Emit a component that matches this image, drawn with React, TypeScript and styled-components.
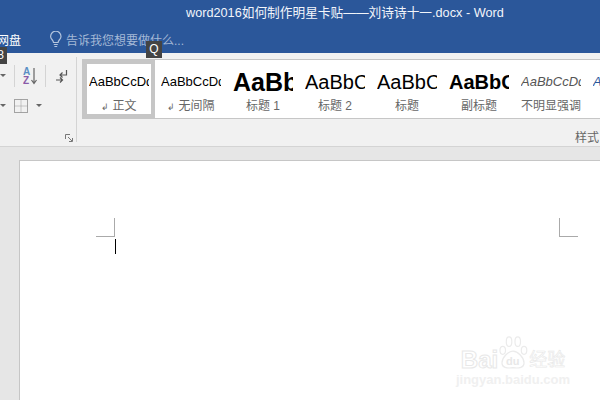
import React from "react";
import styled, { createGlobalStyle } from "styled-components";

const GlobalStyle = createGlobalStyle`
    html, body {
        margin: 0;
        padding: 0;
        background: #e6e6e6;
    }
    body {
        font-family: "Liberation Sans", "Noto Sans CJK SC", sans-serif;
    }
`

interface IStyleItem {
    sample: string,
    name: string,
    size: number,
    bold?: boolean,
    italic?: boolean,
    mark?: boolean,
    selected?: boolean,
    sampleColor?: string
}

const styleItems: IStyleItem[] = [
    { sample: "AaBbCcDd", name: "正文", size: 13, mark: true, selected: true },
    { sample: "AaBbCcDd", name: "无间隔", size: 13, mark: true },
    { sample: "AaBbC", name: "标题 1", size: 25, bold: true },
    { sample: "AaBbC", name: "标题 2", size: 20 },
    { sample: "AaBbC", name: "标题", size: 20 },
    { sample: "AaBbC", name: "副标题", size: 20, bold: true },
    { sample: "AaBbCcDd", name: "不明显强调", size: 13, italic: true, sampleColor: "#555" },
    { sample: "AaBbCcDd", name: "", size: 13, italic: true, sampleColor: "#2b579a" },
];

const App: React.FC = () => {
    return (
        <Page>
            <GlobalStyle />
            <TitleBar>
                <TitleRow>word2016如何制作明星卡贴——刘诗诗十一.docx - Word</TitleRow>
                <TabRow>
                    <TabName>网盘</TabName>
                    <TellMe>
                        <svg width="14" height="17" viewBox="0 0 14 17" fill="none" stroke="#b4c5de" strokeWidth="1.2">
                            <path d="M4.5 11.5C4.5 9 1.6 8.4 1.6 5.4a5.2 5.2 0 0 1 10.4 0c0 3-2.9 3.6-2.9 6.1z" />
                            <path d="M4.8 13.5h4M5.4 15.5h2.8" />
                        </svg>
                        <TellMeText>告诉我您想要做什么...</TellMeText>
                    </TellMe>
                </TabRow>
                <KeyTip $left={-6} $top={47} $width={13}>8</KeyTip>
                <KeyTip $left={146} $top={41} $width={16}>Q</KeyTip>
            </TitleBar>
            <Ribbon>
                <ParagraphGroup>
                    <ToolRow>
                        <Caret />
                        <Divider />
                        <svg width="14" height="20" viewBox="0 0 14 20">
                            <text x="0" y="9" fontSize="10" fontWeight="700" fill="#5b8fc5" fontFamily="Liberation Sans">A</text>
                            <text x="0" y="18" fontSize="10" fontWeight="700" fill="#8a5ba8" fontFamily="Liberation Sans">Z</text>
                            <path d="M11 2v15M8.5 14l2.5 3.5 2.5-3.5" stroke="#666" strokeWidth="1.2" fill="none" />
                        </svg>
                        <Divider />
                        <svg width="16" height="16" viewBox="0 0 16 16" fill="none" stroke="#555" strokeWidth="1.2">
                            <path d="M12.5 2v5H6M8.5 4.5 6 7l2.5 2.5" />
                            <path d="M2 12h6M6 9.5 8.5 12 6 14.5" />
                        </svg>
                    </ToolRow>
                    <ToolRow>
                        <Caret />
                        <svg width="14" height="14" viewBox="0 0 14 14" fill="none" stroke="#555" strokeWidth="1" strokeDasharray="1 1">
                            <path d="M.5.5h13v13H.5z" />
                            <path d="M7 .5v13M.5 7h13" stroke="#999" />
                        </svg>
                        <Caret />
                    </ToolRow>
                    <Launcher>
                        <svg width="8" height="8" viewBox="0 0 8 8" fill="none" stroke="#777">
                            <path d="M.5 5V.5H5M3 3l4 4M7.5 4v3.5H4" />
                        </svg>
                    </Launcher>
                </ParagraphGroup>
                <StylesGroup>
                    <Gallery>
                        {styleItems.map((item, index) => (
                            <StyleCard key={index} $selected={item.selected}>
                                <Sample
                                    $size={item.size}
                                    $bold={item.bold}
                                    $italic={item.italic}
                                    $color={item.sampleColor}
                                >
                                    {item.sample}
                                </Sample>
                                <StyleName>
                                    {item.mark && <ReturnMark>↲</ReturnMark>}
                                    {item.name}
                                </StyleName>
                            </StyleCard>
                        ))}
                    </Gallery>
                    <GroupLabel>样式</GroupLabel>
                </StylesGroup>
            </Ribbon>
            <DocArea>
                <DocPage>
                    <Margins>
                        <LeftCorner>
                            <Cursor />
                        </LeftCorner>
                        <RightCorner />
                    </Margins>
                    <Watermark>
                        <WatermarkLogo>
                            <WatermarkBrand>Bai</WatermarkBrand>
                            <svg width="30" height="37" viewBox="0 0 38 46" fill="#fff" stroke="#ebebeb" strokeWidth="1.5">
                                <ellipse cx="6" cy="19" rx="3.5" ry="5" />
                                <ellipse cx="14" cy="8" rx="3.5" ry="6" />
                                <ellipse cx="25" cy="8" rx="3.5" ry="6" />
                                <ellipse cx="33" cy="19" rx="3.5" ry="5" />
                                <path d="M19 20c6 0 14 8 14 15 0 6-6 7-14 6-8 1-14 0-14-6 0-7 8-15 14-15z" />
                                <text x="10" y="38" fontSize="14" fontWeight="700" fill="#e8e8e8" strokeWidth="0" fontFamily="Liberation Sans">du</text>
                            </svg>
                            <WatermarkBrand $small>经验</WatermarkBrand>
                        </WatermarkLogo>
                        <WatermarkUrl>jingyan.baidu.com</WatermarkUrl>
                    </Watermark>
                </DocPage>
            </DocArea>
        </Page>
    )
}

const Page = styled.div`
    width: 600px;
    height: 400px;
    overflow: hidden;
    display: flex;
    flex-direction: column;
`

const TitleBar = styled.div`
    position: relative;
    height: 53px;
    flex-shrink: 0;
    background: #2b579a;
    color: #fff;
`

const TitleRow = styled.div`
    height: 26px;
    line-height: 26px;
    padding-left: 186px;
    font-size: 12.7px;
    white-space: nowrap;
    color: #f2f5fa;
`

const TabRow = styled.div`
    height: 27px;
    display: flex;
    align-items: center;
`

const TabName = styled.div`
    width: 52px;
    margin-left: -3px;
    font-size: 12px;
`

const TellMe = styled.div`
    display: flex;
    align-items: center;
    gap: 3px;
`

const TellMeText = styled.span`
    font-size: 12px;
    color: #a5b9d6;
`

const KeyTip = styled.div<{ $left: number, $top: number, $width: number }>`
    position: absolute;
    left: ${p => p.$left}px;
    top: ${p => p.$top}px;
    width: ${p => p.$width}px;
    height: 17px;
    background: #444;
    color: #fff;
    font-size: 12px;
    line-height: 17px;
    text-align: center;
    z-index: 10;
`

const Ribbon = styled.div`
    height: 94px;
    flex-shrink: 0;
    display: flex;
    background: #f1f1f1;
    border-bottom: 1px solid #d4d4d4;
    box-sizing: border-box;
`

const ParagraphGroup = styled.div`
    position: relative;
    width: 77px;
    flex-shrink: 0;
    box-sizing: border-box;
    margin-top: 4px;
    padding-top: 6px;
    height: 85px;
    border-right: 1px solid #d4d4d4;
    display: flex;
    flex-direction: column;
    gap: 5px;
`

const ToolRow = styled.div`
    height: 25px;
    display: flex;
    align-items: center;
    gap: 8px;
`

const Caret = styled.span`
    width: 0;
    height: 0;
    flex-shrink: 0;
    border-left: 3px solid transparent;
    border-right: 3px solid transparent;
    border-top: 3px solid #666;
`

const Divider = styled.span`
    width: 1px;
    height: 22px;
    background: #d4d4d4;
`

const Launcher = styled.div`
    position: absolute;
    right: 3px;
    bottom: 0;
    display: flex;
`

const StylesGroup = styled.div`
    flex: 1;
    min-width: 0;
    padding: 6px 0 0 5px;
    display: flex;
    flex-direction: column;
`

const Gallery = styled.div`
    height: 60px;
    flex-shrink: 0;
    box-sizing: border-box;
    background: #fff;
    border: 1px solid #c6c6c6;
    border-right: 0;
    display: flex;
    overflow: hidden;
`

const StyleCard = styled.div<{ $selected?: boolean }>`
    width: 72px;
    flex-shrink: 0;
    box-sizing: border-box;
    border: 4px solid ${p => p.$selected ? "#c6c6c6" : "transparent"};
    padding: 0 2px;
    display: flex;
    flex-direction: column;
    align-items: center;
    overflow: hidden;
`

const Sample = styled.div<{ $size: number, $bold?: boolean, $italic?: boolean, $color?: string }>`
    width: 60px;
    height: 34px;
    line-height: 36px;
    padding-right: 2px;
    box-sizing: border-box;
    flex-shrink: 0;
    overflow: hidden;
    white-space: nowrap;
    text-align: left;
    font-size: ${p => p.$size}px;
    font-weight: ${p => p.$bold ? 700 : 400};
    font-style: ${p => p.$italic ? "italic" : "normal"};
    color: ${p => p.$color || "#000"};
`

const StyleName = styled.div`
    font-size: 12px;
    line-height: 17px;
    color: #666;
    white-space: nowrap;
`

const ReturnMark = styled.span`
    font-size: 9px;
    margin-right: 3px;
`

const GroupLabel = styled.div`
    font-size: 12px;
    line-height: 16px;
    margin-top: 11px;
    padding-left: 493px;
    white-space: nowrap;
    color: #666;
`

const DocArea = styled.div`
    flex: 1;
    background: #e6e6e6;
    padding: 13px 0 0 19px;
    min-height: 0;
`

const DocPage = styled.div`
    position: relative;
    height: 100%;
    box-sizing: border-box;
    background: #fff;
    border-left: 1px solid #c6c6c6;
    border-top: 1px solid #c6c6c6;
`

const Margins = styled.div`
    display: flex;
    justify-content: space-between;
    padding: 57px 22px 0 76px;
`

const LeftCorner = styled.div`
    position: relative;
    width: 18px;
    height: 18px;
    border-right: 1px solid #aaa;
    border-bottom: 1px solid #aaa;
`

const RightCorner = styled.div`
    width: 18px;
    height: 18px;
    border-left: 1px solid #aaa;
    border-bottom: 1px solid #aaa;
`

const Cursor = styled.div`
    position: absolute;
    left: 19px;
    top: 21px;
    width: 1px;
    height: 15px;
    background: #000;
`

const Watermark = styled.div`
    position: absolute;
    right: 34px;
    bottom: 13px;
    width: 106px;
    display: flex;
    flex-direction: column;
    align-items: center;
`

const WatermarkLogo = styled.div`
    display: flex;
    align-items: flex-end;
`

const WatermarkBrand = styled.span<{ $small?: boolean }>`
    font-size: ${p => p.$small ? 18 : 24}px;
    font-weight: ${p => p.$small ? 400 : 700};
    line-height: 24px;
    color: #fff;
    -webkit-text-stroke: ${p => p.$small ? 0.6 : 1}px #e8e8e8;
    margin-left: ${p => p.$small ? 1 : 0}px;
`

const WatermarkUrl = styled.div`
    font-size: 13px;
    font-weight: 700;
    line-height: 14px;
    white-space: nowrap;
    color: #f0f0f0;
    margin-top: 1px;
`

export default App;
